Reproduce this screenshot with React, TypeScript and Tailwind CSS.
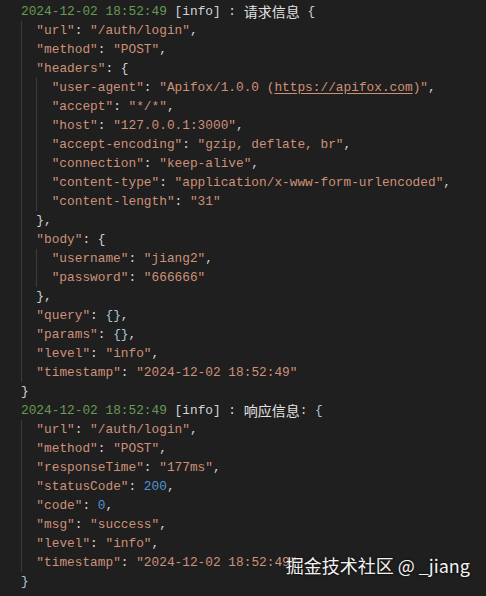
type Tok = [string, string];

const C: Record<string, string> = {
  d: "text-[#6a9955]",
  p: "text-[#d4d4d4]",
  s: "text-[#ce9178]",
  u: "text-[#ce9178] underline underline-offset-2",
  n: "text-[#4f94d4]",
  b: "text-[#c9d3d6]",
  q: "text-[#a7c7d9]",
  z: "text-[#e2e2e2] text-[14px] font-['Noto_Sans_CJK_SC',sans-serif]",
};

const kv = (k: string, v: Tok[], comma = true): Tok[] => [
  ["s", `"${k}"`],
  ["p", ": "],
  ...v,
  ...(comma ? ([["p", ","]] as Tok[]) : []),
];
const str = (v: string): Tok[] => [["s", `"${v}"`]];

const head = (label: string, tail: Tok[]): Tok[] => [
  ["d", "2024-12-02 18:52:49"],
  ["p", " [info] : "],
  ["z", label],
  ...tail,
];

const lines: [number, Tok[]][] = [
  [0, head("请求信息", [["p", " "], ["b", "{"]])],
  [1, kv("url", str("/auth/login"))],
  [1, kv("method", str("POST"))],
  [1, kv("headers", [["b", "{"]], false)],
  [
    2,
    kv("user-agent", [
      ["s", '"Apifox/1.0.0 ('],
      ["u", "https://apifox.com"],
      ["s", ')"'],
    ]),
  ],
  [2, kv("accept", str("*/*"))],
  [2, kv("host", str("127.0.0.1:3000"))],
  [2, kv("accept-encoding", str("gzip, deflate, br"))],
  [2, kv("connection", str("keep-alive"))],
  [2, kv("content-type", str("application/x-www-form-urlencoded"))],
  [2, kv("content-length", str("31"), false)],
  [1, [["b", "}"], ["p", ","]]],
  [1, kv("body", [["b", "{"]], false)],
  [2, kv("username", str("jiang2"))],
  [2, kv("password", str("666666"), false)],
  [1, [["b", "}"], ["p", ","]]],
  [1, kv("query", [["q", "{}"]])],
  [1, kv("params", [["q", "{}"]])],
  [1, kv("level", str("info"))],
  [1, kv("timestamp", str("2024-12-02 18:52:49"), false)],
  [0, [["b", "}"]]],
  [0, head("响应信息", [["p", ": "], ["q", "{"]])],
  [1, kv("url", str("/auth/login"))],
  [1, kv("method", str("POST"))],
  [1, kv("responseTime", str("177ms"))],
  [1, kv("statusCode", [["n", "200"]])],
  [1, kv("code", [["n", "0"]])],
  [1, kv("msg", str("success"))],
  [1, kv("level", str("info"))],
  [1, kv("timestamp", str("2024-12-02 18:52:49"), false)],
  [0, [["q", "}"]]],
];

function Line({ depth, toks }: { depth: number; toks: Tok[] }) {
  return (
    <div className="flex h-[19px] items-center whitespace-pre">
      {Array.from({ length: depth }).map((_, i) => (
        <span key={i} className="h-full w-[2ch] shrink-0 border-l border-[#3c3c3c]" />
      ))}
      {toks.map(([t, text], i) => (
        <span key={i} className={C[t]}>
          {text}
        </span>
      ))}
    </div>
  );
}

export default function App() {
  return (
    <div className="relative h-[596px] w-[486px] overflow-hidden bg-[#1f1f1f]">
      <div className="pl-[21px] pt-[2px] font-['Liberation_Mono','Noto_Sans_CJK_SC',monospace] text-[12.8px] text-[#d4d4d4]">
        {lines.map(([depth, toks], i) => (
          <Line key={i} depth={depth} toks={toks} />
        ))}
      </div>

      {/* watermark */}
      <div className="absolute right-[16px] top-[552px] font-['Noto_Sans_CJK_SC',sans-serif] text-[18px] leading-[26px] text-[#f2f2f2] [text-shadow:0_0_3px_rgba(0,0,0,0.8)]">
        掘金技术社区 @ _jiang
      </div>
    </div>
  );
}
